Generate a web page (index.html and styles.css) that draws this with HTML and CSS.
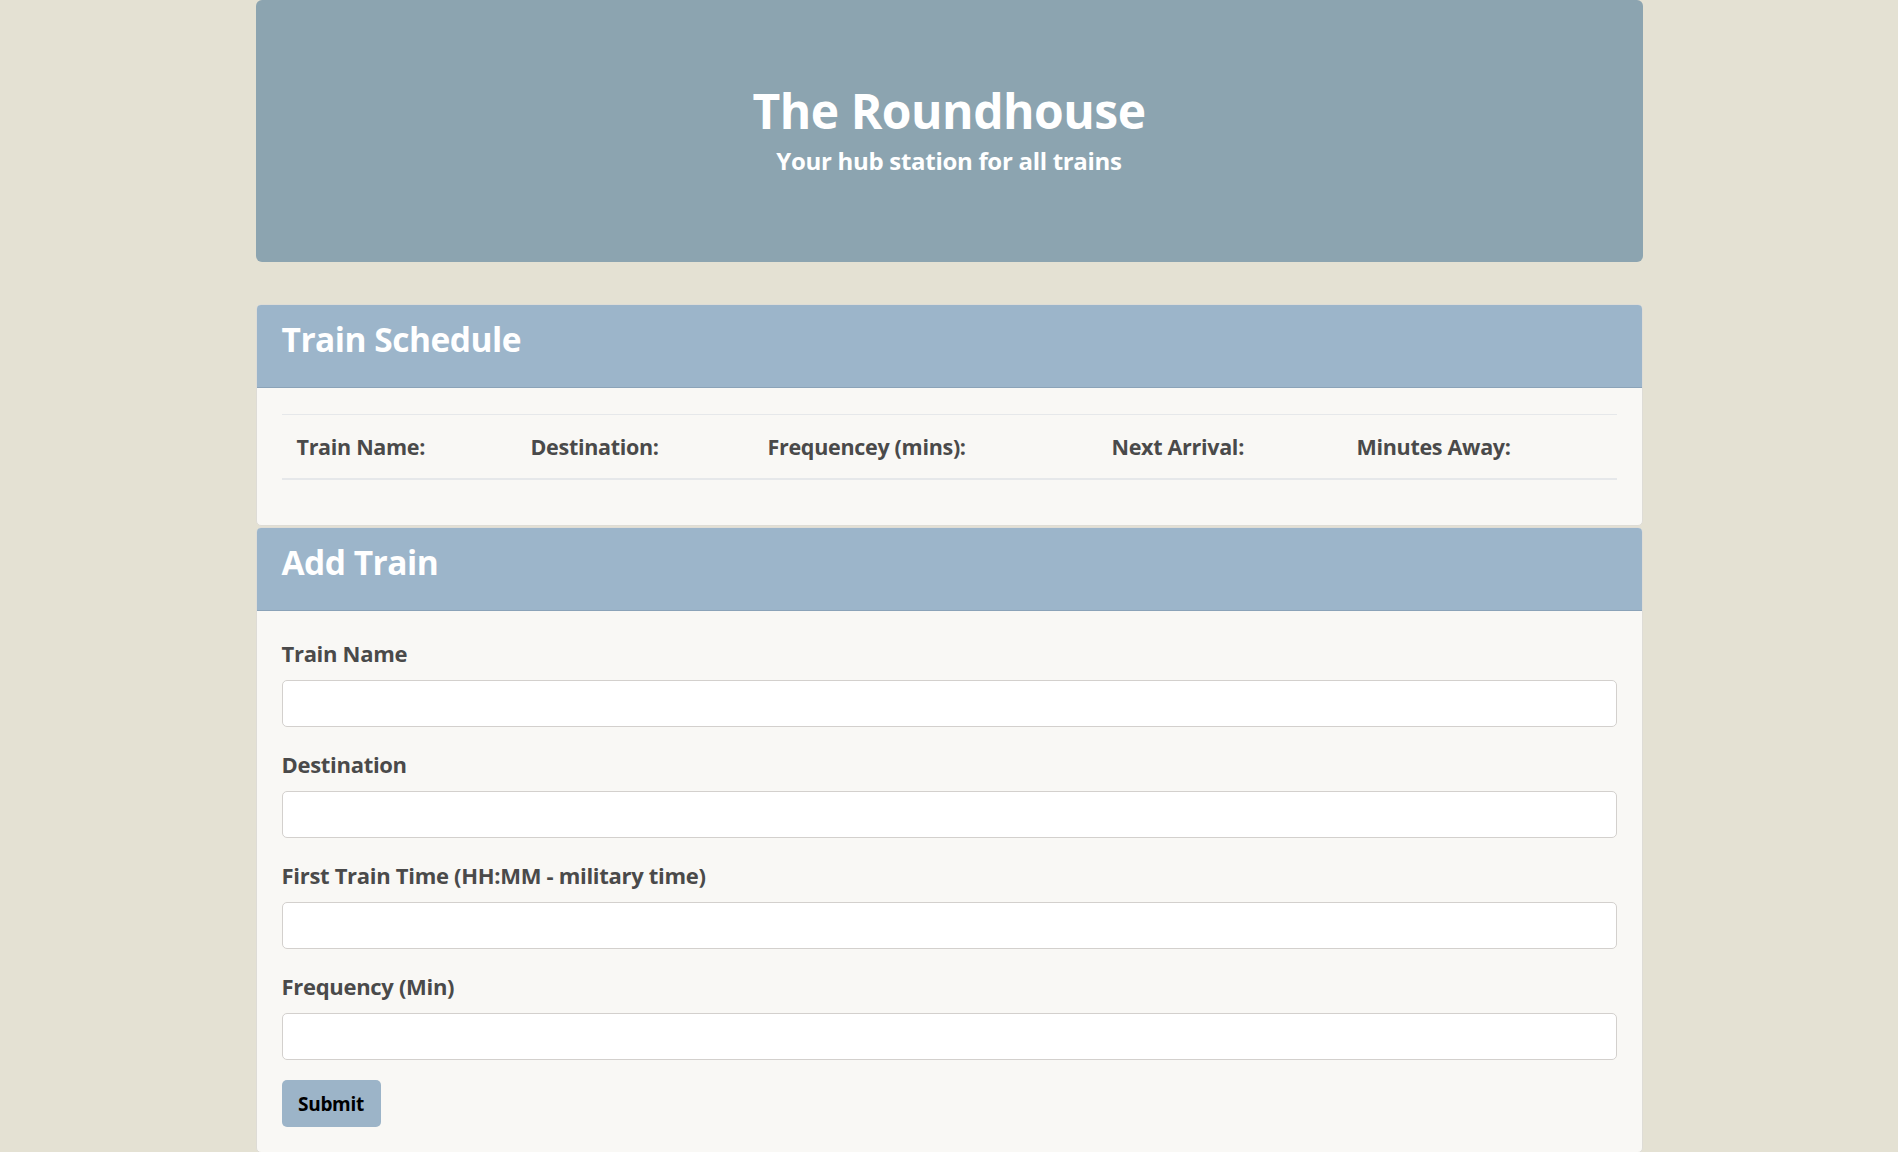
FILE: index.html
```html
<!DOCTYPE html>
<html lang="en">
<head>
<meta charset="utf-8">
<title>The Roundhouse</title>
<link rel="stylesheet" href="styles.css">
</head>
<body>
<div class="container">
  <header class="jumbotron">
    <h1 class="title">The Roundhouse</h1>
    <p class="subtitle">Your hub station for all trains</p>
  </header>

  <section class="panel schedule">
    <div class="panel-heading"><h2 class="panel-title">Train Schedule</h2></div>
    <div class="panel-body">
      <div class="table">
        <div class="thead">
          <div class="th">Train Name:</div>
          <div class="th">Destination:</div>
          <div class="th">Frequencey (mins):</div>
          <div class="th">Next Arrival:</div>
          <div class="th">Minutes Away:</div>
        </div>
      </div>
    </div>
  </section>

  <section class="panel add">
    <div class="panel-heading"><h2 class="panel-title">Add Train</h2></div>
    <form class="panel-body form">
      <div class="form-group">
        <label class="label" for="name">Train Name</label>
        <input class="input" id="name" type="text">
      </div>
      <div class="form-group">
        <label class="label" for="dest">Destination</label>
        <input class="input" id="dest" type="text">
      </div>
      <div class="form-group">
        <label class="label" for="first">First Train Time (HH:MM - military time)</label>
        <input class="input" id="first" type="text">
      </div>
      <div class="form-group">
        <label class="label" for="freq">Frequency (Min)</label>
        <input class="input" id="freq" type="text">
      </div>
      <button class="btn" type="button">Submit</button>
    </form>
  </section>
</div>
</body>
</html>
```
FILE: styles.css
```css
* { box-sizing: border-box; }
html, body { margin: 0; padding: 0; }
body {
  background: #e4e1d3;
  font-family: "Open Sans", "Noto Sans", sans-serif;
  color: #4a4a4a;
}
.container {
  width: 1387px;
  margin: 0 auto;
  padding-bottom: 40px;
}
.jumbotron {
  height: 262px;
  background: #8ca4b0;
  border-radius: 6px;
  text-align: center;
  color: #fff;
  padding-top: 81px;
}
.title {
  margin: 0;
  font-size: 48px;
  font-weight: 700;
  line-height: 60px;
  letter-spacing: -0.5px;
}
.subtitle {
  margin: 5px 0 0;
  font-size: 24px;
  font-weight: 700;
  line-height: 30px;
  letter-spacing: -0.3px;
}
.panel {
  background: #f9f8f5;
  border: 1px solid #dedcd6;
  border-radius: 5px;
  overflow: hidden;
}
.schedule { margin-top: 42px; }
.add { margin-top: 1px; }
.panel-heading {
  background: #9cb5ca;
  border-bottom: 1px solid #8ba3b8;
  height: 83px;
  padding: 14px 25px 0;
}
.panel-title {
  margin: 0;
  color: #fff;
  font-size: 33.5px;
  font-weight: 700;
  letter-spacing: -0.5px;
  line-height: 40px;
}
.panel-body { padding: 25px; }
.schedule .panel-body { padding: 26px 25px 45px; }
.thead {
  display: grid;
  grid-template-columns: 234px 237px 344px 245px 1fr;
  border-top: 1px solid #e6e8ea;
  border-bottom: 2px solid #e6e8ea;
  height: 66px;
  align-items: center;
}
.th {
  padding-left: 15px;
  font-weight: 700;
  font-size: 21.5px;
  letter-spacing: -0.3px;
}
.label {
  display: block;
  font-weight: 700;
  font-size: 22px;
  letter-spacing: -0.3px;
  line-height: 34px;
  margin-bottom: 10px;
}
.form-group { margin-bottom: 20px; }
.input {
  display: block;
  width: 100%;
  height: 47px;
  background: #fff;
  border: 1px solid #d3d0cd;
  border-radius: 5px;
  font-family: inherit;
  font-size: 20px;
  padding: 0 14px;
}
.btn {
  display: block;
  width: 99px;
  height: 47px;
  background: #9cb4c8;
  border: none;
  border-radius: 5px;
  font-family: inherit;
  font-weight: 700;
  font-size: 19px;
  color: #000;
  letter-spacing: -0.3px;
  padding: 0;
}
```
